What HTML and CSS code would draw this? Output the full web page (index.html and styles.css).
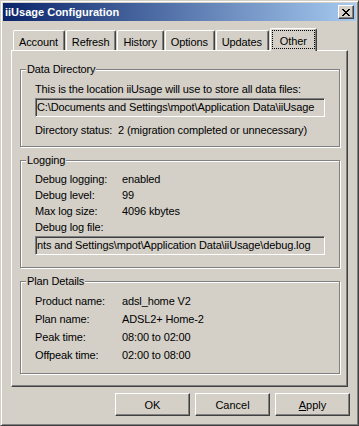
FILE: index.html
```html
<!DOCTYPE html>
<html>
<head>
    <title>iiUsage Configuration</title>
    <link rel="stylesheet" href="styles.css">
</head>
<body>
    <div class="window">
        <div class="titlebar">
            <span class="title">iiUsage Configuration</span>
            <button class="close-btn" title="Close">
                <svg width="8" height="7" viewBox="0 0 8 7">
                    <path d="M0 0h2v1H0zM6 0h2v1H6zM1 1h2v1H1zM5 1h2v1H5zM2 2h4v1H2zM3 3h2v1H3zM2 4h4v1H2zM1 5h2v1H1zM5 5h2v1H5zM0 6h2v1H0zM6 6h2v1H6z" fill="#000"/>
                </svg>
            </button>
        </div>

        <div class="tabs">
            <div class="tab">Account</div>
            <div class="tab">Refresh</div>
            <div class="tab">History</div>
            <div class="tab">Options</div>
            <div class="tab">Updates</div>
            <div class="tab active"><span class="focus">Other</span></div>
        </div>

        <div class="tab-panel">
            <fieldset class="group">
                <legend>Data Directory</legend>
                <div class="group-body dir-body">
                    <div class="line">This is the location iiUsage will use to store all data files:</div>
                    <div class="textbox">C:\Documents and Settings\mpot\Application Data\iiUsage</div>
                    <div class="line status">Directory status:&nbsp; 2 (migration completed or unnecessary)</div>
                </div>
            </fieldset>

            <fieldset class="group">
                <legend>Logging</legend>
                <div class="group-body log-body">
                    <div class="info">
                        <span>Debug logging:</span><span>enabled</span>
                        <span>Debug level:</span><span>99</span>
                        <span>Max log size:</span><span>4096 kbytes</span>
                        <span>Debug log file:</span><span></span>
                    </div>
                    <div class="textbox">nts and Settings\mpot\Application Data\iiUsage\debug.log</div>
                </div>
            </fieldset>

            <fieldset class="group">
                <legend>Plan Details</legend>
                <div class="group-body plan-body">
                    <div class="info">
                        <span>Product name:</span><span>adsl_home V2</span>
                        <span>Plan name:</span><span>ADSL2+ Home-2</span>
                        <span>Peak time:</span><span>08:00 to 02:00</span>
                        <span>Offpeak time:</span><span>02:00 to 08:00</span>
                    </div>
                </div>
            </fieldset>
        </div>

        <div class="buttons">
            <button class="btn">OK</button>
            <button class="btn">Cancel</button>
            <button class="btn"><u>A</u>pply</button>
        </div>
    </div>
</body>
</html>
```

FILE: styles.css
```css
body {
    margin: 0;
    background-color: #d4d0c8;
    font-family: "Liberation Sans", Arial, sans-serif;
    font-size: 11px;
    letter-spacing: -0.13px;
    color: #000;
}
.window {
    width: 359px;
    height: 426px;
    box-sizing: border-box;
    padding: 2px;
    background-color: #d4d0c8;
    border: 1px solid;
    border-color: #d4d0c8 #404040 #404040 #d4d0c8;
    box-shadow: inset 1px 1px 0 #fff, inset -1px -1px 0 #808080;
}
.titlebar {
    display: flex;
    align-items: center;
    justify-content: space-between;
    height: 18px;
    padding: 0 2px;
    background: linear-gradient(to right, #0a246a, #a6caf0);
}
.title {
    color: #fff;
    font-weight: bold;
    letter-spacing: 0;
}
.close-btn {
    display: flex;
    align-items: center;
    justify-content: center;
    width: 16px;
    height: 14px;
    box-sizing: border-box;
    padding: 0 1px 0 0;
    background-color: #d4d0c8;
    border: 1px solid;
    border-color: #fff #404040 #404040 #fff;
    box-shadow: inset -1px -1px 0 #808080;
}
.tabs {
    display: flex;
    align-items: flex-end;
    gap: 1px;
    height: 22px;
    margin-top: 7px;
    padding-left: 10px;
}
.tab {
    height: 20px;
    box-sizing: border-box;
    padding: 5px 6px 0 5px;
    line-height: 13px;
    white-space: nowrap;
    border: 1px solid;
    border-bottom: 0;
    border-color: #fff #404040 #404040 #fff;
    border-radius: 2px 2px 0 0;
    box-shadow: inset -1px 0 0 #808080;
}
.tab.active {
    position: relative;
    z-index: 1;
    height: 23px;
    margin-bottom: -1px;
    padding: 1px 1px 2px;
    background-color: #d4d0c8;
}
.tab.active .focus {
    display: block;
    height: 100%;
    box-sizing: border-box;
    padding: 4px 7px 0;
    border: 1px dotted #000;
}
.tab-panel {
    height: 337px;
    box-sizing: border-box;
    margin: 0 8px;
    padding: 12px 7px 0 8px;
    border: 1px solid;
    border-color: #fff #404040 #404040 #fff;
    box-shadow: inset -1px -1px 0 #808080;
}
.group {
    min-width: 0;
    margin: 0;
    padding: 0;
    border: 1px solid #808080;
    box-shadow: 1px 1px 0 #fff, inset 1px 1px 0 #fff;
}
.group + .group {
    margin-top: 7px;
}
.group legend {
    margin-left: 5px;
    padding: 0 1px;
    line-height: 13px;
    background-color: #d4d0c8;
}
.group-body {
    padding: 4px 14px 9px;
}
.dir-body {
    padding-top: 7px;
}
.log-body {
    padding-bottom: 12px;
}
.line {
    line-height: 13px;
    white-space: nowrap;
}
.status {
    margin-top: 7px;
}
.textbox {
    height: 19px;
    box-sizing: border-box;
    margin-top: 2px;
    padding: 0 1px;
    line-height: 17px;
    white-space: nowrap;
    overflow: hidden;
    border: 1px solid;
    border-color: #808080 #fff #fff #808080;
    box-shadow: inset 1px 1px 0 #404040, inset -1px -1px 0 #d4d0c8;
}
.log-body .textbox {
    margin-top: 1px;
}
.info {
    display: grid;
    grid-template-columns: 87px 1fr;
    line-height: 16px;
}
.plan-body .info {
    line-height: 18px;
}
.buttons {
    display: flex;
    justify-content: flex-end;
    gap: 5px;
    margin-top: 6px;
    padding-right: 6px;
}
.btn {
    width: 75px;
    height: 23px;
    box-sizing: border-box;
    padding: 0;
    font: inherit;
    color: #000;
    background-color: #d4d0c8;
    border: 1px solid;
    border-color: #fff #404040 #404040 #fff;
    box-shadow: inset -1px -1px 0 #808080;
}
```
